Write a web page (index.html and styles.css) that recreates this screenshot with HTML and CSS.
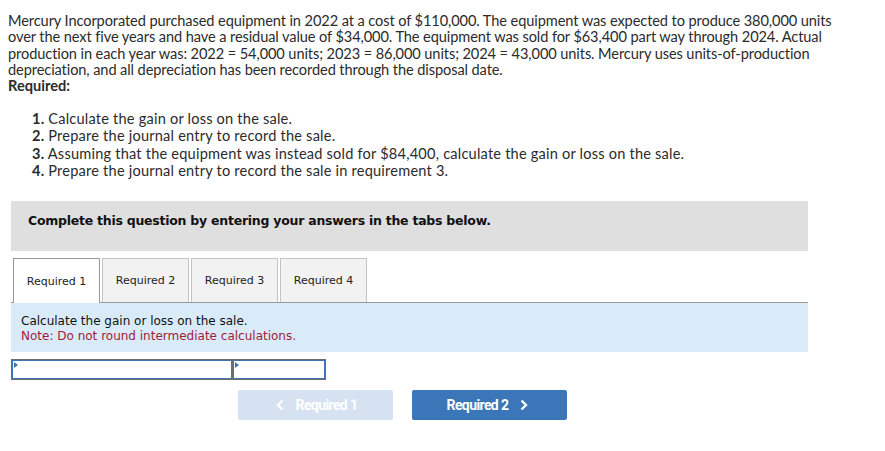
FILE: index.html
```html
<!DOCTYPE html>
<html lang="en">
<head>
    <meta charset="UTF-8">
    <meta name="viewport" content="width=device-width, initial-scale=1.0">
    <title>Question</title>
    <link rel="stylesheet" href="styles.css">
</head>
<body>
    <div class="question">
        <p class="intro">Mercury Incorporated purchased equipment in 2022 at a cost of $110,000. The equipment was expected to produce 380,000 units<br>
        over the next five years and have a residual value of $34,000. The equipment was sold for $63,400 part way through 2024. Actual<br>
        production in each year was: 2022 = 54,000 units; 2023 = 86,000 units; 2024 = 43,000 units. Mercury uses units-of-production<br>
        depreciation, and all depreciation has been recorded through the disposal date.</p>
        <p class="required">Required:</p>
        <ol class="steps">
            <li><b>1.</b> Calculate the gain or loss on the sale.</li>
            <li><b>2.</b> Prepare the journal entry to record the sale.</li>
            <li><b>3.</b> Assuming that the equipment was instead sold for $84,400, calculate the gain or loss on the sale.</li>
            <li><b>4.</b> Prepare the journal entry to record the sale in requirement 3.</li>
        </ol>
    </div>

    <div class="work">
        <div class="banner">Complete this question by entering your answers in the tabs below.</div>

        <div class="tabs">
            <div class="tab active">Required 1</div>
            <div class="tab">Required 2</div>
            <div class="tab">Required 3</div>
            <div class="tab">Required 4</div>
        </div>

        <div class="prompt">
            <div>Calculate the gain or loss on the sale.</div>
            <div class="note">Note: Do not round intermediate calculations.</div>
        </div>

        <div class="answer">
            <div class="cell wide"><span class="flag"></span></div>
            <div class="cell narrow"><span class="flag"></span></div>
        </div>

        <div class="nav">
            <button class="nav-btn prev" disabled>
                <svg class="chev" width="8" height="12" viewBox="0 0 8 12"><path d="M6.5 1.5 2 6l4.5 4.5" fill="none" stroke="currentColor" stroke-width="2.4"/></svg>
                Required 1
            </button>
            <button class="nav-btn next">
                Required 2
                <svg class="chev" width="8" height="12" viewBox="0 0 8 12"><path d="M1.5 1.5 6 6l-4.5 4.5" fill="none" stroke="currentColor" stroke-width="2.4"/></svg>
            </button>
        </div>
    </div>
</body>
</html>
```

FILE: styles.css
```css
body {
    margin: 0;
    padding: 13px 8px 0 8px;
    background-color: #fff;
    color: #2b2b2b;
    font-family: "Lato", "Open Sans", sans-serif;
    font-size: 14.6px;
}
.intro {
    margin: 0;
    white-space: nowrap;
    line-height: 16.3px;
    letter-spacing: -0.1px;
}
.required {
    margin: 0;
    font-weight: bold;
    line-height: 16px;
}
.steps {
    list-style: none;
    margin: 16px 0 0 0;
    padding: 0 0 0 24px;
    line-height: 17.3px;
    letter-spacing: 0.2px;
}
.work {
    margin: 22px 0 0 3px;
    width: 797px;
}
.banner {
    background-color: #dfdfdf;
    height: 50px;
    box-sizing: border-box;
    padding: 12px 0 0 17px;
    font-family: "DejaVu Sans", Verdana, sans-serif;
    font-weight: bold;
    font-size: 12.5px;
    color: #111;
    letter-spacing: -0.25px;
}
.tabs {
    display: flex;
    gap: 2px;
    margin-top: 7px;
    padding-left: 2px;
    border-bottom: 1px solid #999;
}
.tab {
    width: 85px;
    height: 43px;
    display: flex;
    align-items: center;
    justify-content: center;
    background-color: #f2f2f2;
    border: 1px solid #c4c4c4;
    border-bottom: none;
    font-family: "DejaVu Sans", Verdana, sans-serif;
    font-size: 11px;
    color: #222;
}
.tab.active {
    background-color: #fff;
    border-color: #999;
    margin-bottom: -1px;
    height: 44px;
}
.prompt {
    background-color: #d9ebf9;
    height: 49px;
    padding: 11px 0 0 10px;
    box-sizing: border-box;
    font-family: "DejaVu Sans", Verdana, sans-serif;
    font-size: 12px;
    line-height: 14.5px;
    color: #111;
}
.note {
    color: #a01c3a;
}
.answer {
    display: flex;
    margin-top: 7px;
}
.cell {
    position: relative;
    height: 21px;
    box-sizing: border-box;
    border: 1px solid #6d6d6d;
    box-shadow: inset 0 0 0 1px #3d74b4;
}
.cell.wide {
    width: 222px;
}
.cell.narrow {
    width: 94px;
    margin-left: -1px;
}
.flag {
    position: absolute;
    left: 2px;
    top: 2px;
    width: 0;
    height: 0;
    border-top: 3px solid transparent;
    border-bottom: 3px solid transparent;
    border-left: 4px solid #3d74b4;
}
.nav {
    display: flex;
    gap: 19px;
    margin: 10px 0 0 227px;
}
.nav-btn {
    width: 155px;
    height: 30px;
    border: none;
    border-radius: 2px;
    color: #fff;
    font-family: "Roboto", sans-serif;
    font-weight: bold;
    font-size: 14px;
    letter-spacing: -0.6px;
    display: flex;
    align-items: center;
    justify-content: center;
    gap: 12px;
    cursor: pointer;
}
.prev {
    background-color: #d6e2f1;
    cursor: default;
    padding-right: 4px;
}
.next {
    background-color: #3a76b8;
    padding-left: 2px;
}
```
